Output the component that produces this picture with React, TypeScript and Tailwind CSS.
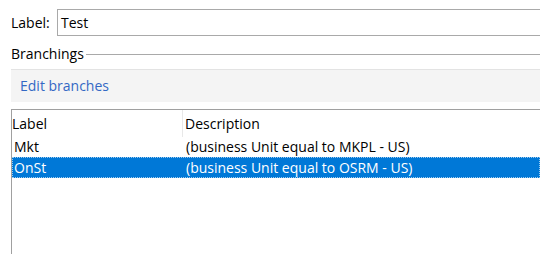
import React from "react";

export default function App() {
  const font = { fontFamily: '"Open Sans", "Noto Sans", sans-serif' };
  return (
    <div className="w-[540px] h-[254px] bg-white overflow-hidden text-[14px] text-black leading-none" style={font}>
      <div className="flex items-center pl-[11px] pt-[9px]">
        <span className="w-[46px]">Label:</span>
        <div className="flex-1 h-[27px] border border-[#a9a9a9] border-r-0 flex items-center pl-[3px]">Test</div>
      </div>
      <div className="flex items-center pl-[11px] mt-[9px] h-[18px]">
        <span>Branchings</span>
        <div className="flex-1 h-px bg-[#a9a9a9] ml-[2px]" />
      </div>
      <div className="ml-[11px] mt-[6px] h-[33px] bg-[#f4f4f4] border-t border-[#e3e3e3] flex items-center pl-[9px] text-[#3368c4]">
        Edit branches
      </div>
      <div className="ml-[11px] mt-[7px] h-[200px] border-t border-l border-[#a0a0a0]">
        <div className="flex h-[27px] items-center">
          <div className="w-[171px] h-full flex items-center border-r border-[#e8e8e8]">Label</div>
          <div className="pl-[2px]">Description</div>
        </div>
        <div className="flex h-[20px] items-center">
          <div className="w-[172px] pl-[2px]">Mkt</div>
          <div className="pl-[2px]">(business Unit equal to MKPL - US)</div>
        </div>
        <div className="flex h-[21px] items-center bg-[#0078d7] text-white border border-dotted border-[#9ccbf0]">
          <div className="w-[171px] pl-[1px]">OnSt</div>
          <div className="pl-[2px]">(business Unit equal to OSRM - US)</div>
        </div>
      </div>
    </div>
  );
}
